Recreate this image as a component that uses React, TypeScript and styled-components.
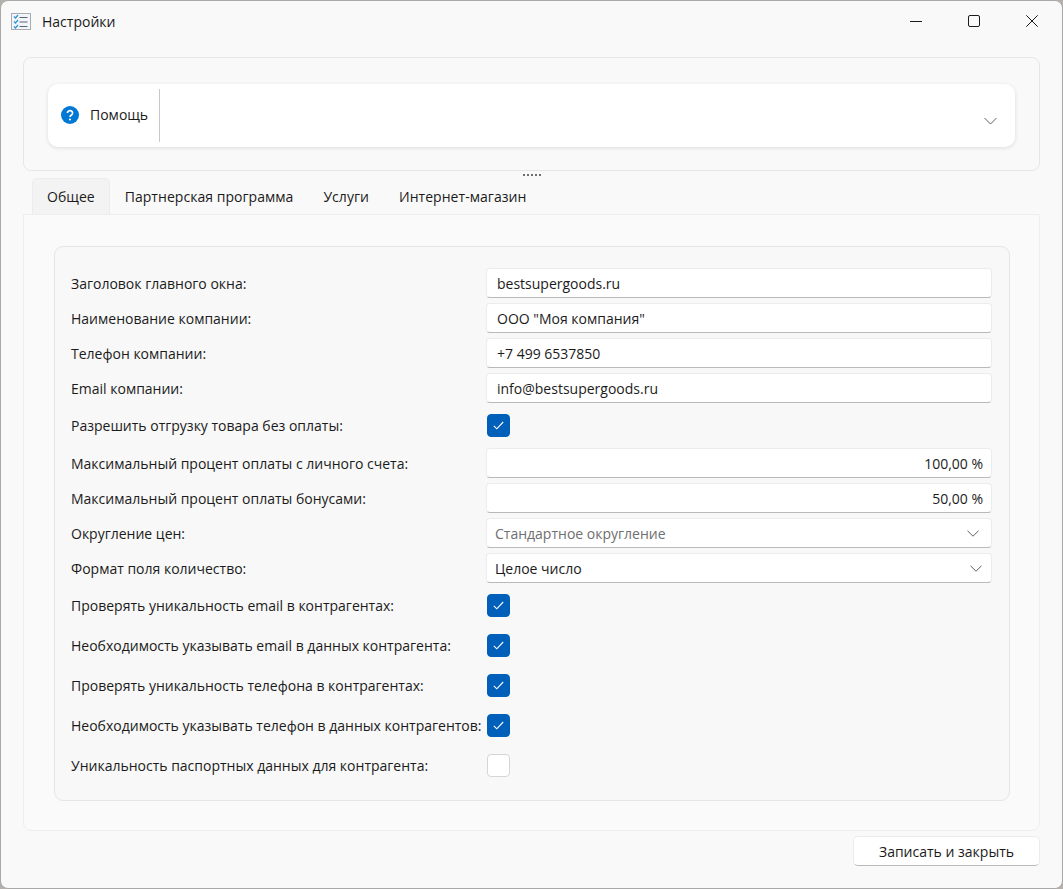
import { FC, Fragment } from 'react'
import styled, { createGlobalStyle } from 'styled-components'

const GlobalStyle = createGlobalStyle`
  html, body {
    margin: 0;
    padding: 0;
    background: #b5b0ac;
  }
  * {
    box-sizing: border-box;
  }
`

const Window = styled.div`
  display: flex;
  flex-direction: column;
  width: 1063px;
  height: 889px;
  border: 1px solid #a8a8a8;
  border-radius: 8px;
  background: #f9f9f9;
  color: #1b1b1b;
  font-family: 'Open Sans', 'Noto Sans', sans-serif;
  font-size: 14px;
  overflow: hidden;
`

const TitleBar = styled.header`
  display: flex;
  align-items: center;
  flex: none;
  height: 40px;
  padding: 0 1px 0 10px;
`

const AppIcon = styled.svg`
  width: 20px;
  height: 17px;
  margin-right: 11px;
`

const WindowTitle = styled.span`
  flex: 1;
`

const WindowButton = styled.div`
  display: flex;
  align-items: center;
  justify-content: center;
  width: 58px;
  height: 40px;
`

const Main = styled.main`
  display: flex;
  flex-direction: column;
  flex: 1;
  padding: 16px 22px 0;
`

const TopPanel = styled.section`
  flex: none;
  height: 114px;
  padding: 26px 24px 0;
  border: 1px solid #e6e6e6;
  border-radius: 8px;
`

const HelpBox = styled.div`
  position: relative;
  display: flex;
  align-items: center;
  height: 63px;
  padding: 0 13px 2px;
  border-radius: 10px;
  background: #fff;
  box-shadow: 0 1px 4px rgba(0, 0, 0, 0.12);
`

const HelpIcon = styled.svg`
  width: 18px;
  height: 18px;
  margin-right: 11px;
`

const HelpDivider = styled.div`
  width: 1px;
  height: 53px;
  margin: 2px 0 0 11px;
  background: #c8c8c8;
`

const HelpChevron = styled.svg`
  position: absolute;
  top: 33px;
  right: 18px;
  width: 13px;
  height: 8px;
`

const Splitter = styled.div`
  display: flex;
  justify-content: center;
  gap: 2px;
  flex: none;
  height: 7px;
  padding: 3px 0 0 1px;
`

const SplitterDot = styled.span`
  width: 2px;
  height: 2px;
  background: #6e6e6e;
`

const TabBar = styled.nav`
  display: flex;
  flex: none;
  height: 36px;
  margin-left: 9px;
  letter-spacing: 0.04px;
`

const Tab = styled.div<{ $active?: boolean }>`
  display: flex;
  align-items: center;
  height: ${({ $active }) => ($active ? '37px' : '36px')};
  padding: 0 14px ${({ $active }) => ($active ? '2px' : '1px')};
  border: 1px solid ${({ $active }) => ($active ? '#ececec' : 'transparent')};
  border-bottom: none;
  border-radius: 5px 5px 0 0;
  background: ${({ $active }) => ($active ? '#f3f3f3' : 'transparent')};
`

const ContentPanel = styled.section`
  flex: none;
  height: 617px;
  padding: 31px 30px 0 30px;
  border: 1px solid #eeeeee;
  border-radius: 0 0 8px 8px;
  background: #fafafa;
`

const Group = styled.div`
  display: grid;
  grid-template-columns: 415px 506px;
  row-gap: 5px;
  align-content: start;
  align-items: center;
  width: 956px;
  height: 555px;
  padding: 21px 0 0 16px;
  border: 1px solid #e5e5e5;
  border-radius: 9px;
  background: #f8f8f8;
`

const Label = styled.div`
  white-space: nowrap;
`

const Field = styled.div<{ $align?: 'left' | 'right' }>`
  display: flex;
  align-items: center;
  justify-content: ${({ $align }) => ($align === 'right' ? 'flex-end' : 'flex-start')};
  height: 30px;
  padding: 0 8px 0 10px;
  border: 1px solid #ececec;
  border-bottom-color: #b9b9b9;
  border-radius: 4px;
  background: #fff;
`

const Select = styled.div<{ $disabled?: boolean }>`
  display: flex;
  align-items: center;
  justify-content: space-between;
  height: 30px;
  padding: 0 ${({ $disabled }) => ($disabled ? '12px' : '9px')} 0 8px;
  border: 1px solid #ececec;
  border-bottom-color: #b9b9b9;
  border-radius: 4px;
  background: #fff;
  color: ${({ $disabled }) => ($disabled ? '#6f6f6f' : '#1b1b1b')};
`

const SelectChevron = styled.svg`
  width: 12px;
  height: 7px;
`

const CheckRow = styled.div`
  display: flex;
  align-items: center;
  height: 35px;
  padding-left: 1px;
`

const CheckBox = styled.div<{ $checked?: boolean }>`
  display: flex;
  align-items: center;
  justify-content: center;
  width: 23px;
  height: 23px;
  border: 1px solid ${({ $checked }) => ($checked ? '#005fb8' : '#d6d6d6')};
  border-radius: 4px;
  background: ${({ $checked }) => ($checked ? '#005fb8' : '#fff')};
`

const CheckMark = styled.svg`
  width: 11px;
  height: 9px;
`

const Footer = styled.footer`
  display: flex;
  justify-content: flex-end;
  padding-top: 5px;
`

const Button = styled.button`
  width: 187px;
  height: 30px;
  border: 1px solid #ececec;
  border-bottom-color: #b9b9b9;
  border-radius: 5px;
  background: #fff;
  color: #1b1b1b;
  font: inherit;
`

type Row =
  | { kind: 'text'; label: string; value: string; align?: 'left' | 'right' }
  | { kind: 'select'; label: string; value: string; disabled?: boolean }
  | { kind: 'check'; label: string; checked: boolean }

const rows: Row[] = [
  { kind: 'text', label: 'Заголовок главного окна:', value: 'bestsupergoods.ru' },
  { kind: 'text', label: 'Наименование компании:', value: 'ООО "Моя компания"' },
  { kind: 'text', label: 'Телефон компании:', value: '+7 499 6537850' },
  { kind: 'text', label: 'Email компании:', value: 'info@bestsupergoods.ru' },
  { kind: 'check', label: 'Разрешить отгрузку товара без оплаты:', checked: true },
  { kind: 'text', label: 'Максимальный процент оплаты с личного счета:', value: '100,00 %', align: 'right' },
  { kind: 'text', label: 'Максимальный процент оплаты бонусами:', value: '50,00 %', align: 'right' },
  { kind: 'select', label: 'Округление цен:', value: 'Стандартное округление', disabled: true },
  { kind: 'select', label: 'Формат поля количество:', value: 'Целое число' },
  { kind: 'check', label: 'Проверять уникальность email в контрагентах:', checked: true },
  { kind: 'check', label: 'Необходимость указывать email в данных контрагента:', checked: true },
  { kind: 'check', label: 'Проверять уникальность телефона в контрагентах:', checked: true },
  { kind: 'check', label: 'Необходимость указывать телефон в данных контрагентов:', checked: true },
  { kind: 'check', label: 'Уникальность паспортных данных для контрагента:', checked: false },
]

const tabs = ['Общее', 'Партнерская программа', 'Услуги', 'Интернет-магазин']

const Chevron: FC = () => (
  <SelectChevron viewBox="0 0 12 7">
    <path d="M0.5 0.8 6 6.2 11.5 0.8" fill="none" stroke="#5f5f5f" strokeWidth="1" />
  </SelectChevron>
)

const RowControl: FC<{ row: Row }> = ({ row }) => {
  if (row.kind === 'text') {
    return <Field $align={row.align}>{row.value}</Field>
  }
  if (row.kind === 'select') {
    return (
      <Select $disabled={row.disabled}>
        {row.value}
        <Chevron />
      </Select>
    )
  }
  return (
    <CheckRow>
      <CheckBox $checked={row.checked}>
        {row.checked && (
          <CheckMark viewBox="0 0 11 9">
            <path d="M0.8 4.8 3.8 7.8 10.2 1" fill="none" stroke="#fff" strokeWidth="1.1" />
          </CheckMark>
        )}
      </CheckBox>
    </CheckRow>
  )
}

const App: FC = () => {
  return (
    <>
      <GlobalStyle />
      <Window>
        <TitleBar>
          <AppIcon viewBox="0 0 20 17">
            <rect x="0.5" y="0.5" width="19" height="16" fill="#f1f4f8" stroke="#a9adb3" />
            <path d="M3 3.5 4.5 5 7 2M3 8.5 4.5 10 7 7M3 13.5 4.5 15 7 12" fill="none" stroke="#2b93d6" strokeWidth="1.2" />
            <path d="M8.5 4.5H16.5M8.5 9H16.5M8.5 13.5H16.5" stroke="#5c6670" strokeWidth="1" />
          </AppIcon>
          <WindowTitle>Настройки</WindowTitle>
          <WindowButton>
            <svg width="12" height="12" viewBox="0 0 12 12">
              <path d="M0 6.5H12" stroke="#1b1b1b" strokeWidth="1" />
            </svg>
          </WindowButton>
          <WindowButton>
            <svg width="12" height="12" viewBox="0 0 12 12">
              <rect x="0.5" y="0.5" width="11" height="11" rx="1.5" fill="none" stroke="#1b1b1b" />
            </svg>
          </WindowButton>
          <WindowButton>
            <svg width="12" height="12" viewBox="0 0 12 12">
              <path d="M0.3 0.3 11.7 11.7M11.7 0.3 0.3 11.7" stroke="#1b1b1b" strokeWidth="1" />
            </svg>
          </WindowButton>
        </TitleBar>
        <Main>
          <TopPanel>
            <HelpBox>
              <HelpIcon viewBox="0 0 18 18">
                <circle cx="9" cy="9" r="9" fill="#0078d4" />
                <path d="M6.4 7a2.6 2.4 0 1 1 4 2c-.9.6-1.4 1-1.4 2" fill="none" stroke="#fff" strokeWidth="1.7" />
                <circle cx="9" cy="13.5" r="1.1" fill="#fff" />
              </HelpIcon>
              Помощь
              <HelpDivider />
              <HelpChevron viewBox="0 0 13 8">
                <path d="M0.5 1 6.5 7 12.5 1" fill="none" stroke="#5f5f5f" strokeWidth="1" />
              </HelpChevron>
            </HelpBox>
          </TopPanel>
          <Splitter>
            {[0, 1, 2, 3, 4].map((dot) => (
              <SplitterDot key={dot} />
            ))}
          </Splitter>
          <TabBar>
            {tabs.map((tab, index) => (
              <Tab key={tab} $active={index === 0}>
                {tab}
              </Tab>
            ))}
          </TabBar>
          <ContentPanel>
            <Group>
              {rows.map((row) => (
                <Fragment key={row.label}>
                  <Label>{row.label}</Label>
                  <RowControl row={row} />
                </Fragment>
              ))}
            </Group>
          </ContentPanel>
          <Footer>
            <Button>Записать и закрыть</Button>
          </Footer>
        </Main>
      </Window>
    </>
  )
}

export default App
